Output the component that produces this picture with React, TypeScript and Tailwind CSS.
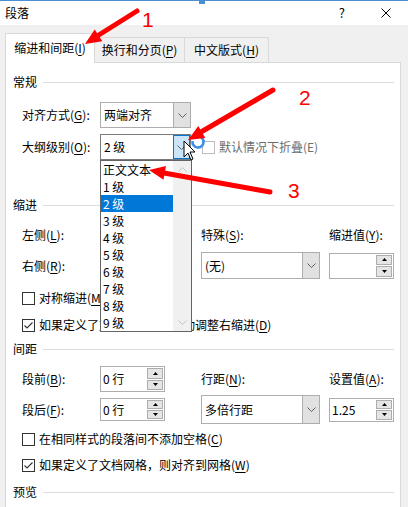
import React from "react";

const Acc = ({ k }: { k: string }) => (
  <>
    (<span className="underline underline-offset-[2px]">{k}</span>)
  </>
);

const Chevron = ({ color = "#606060", up = false }: { color?: string; up?: boolean }) => (
  <svg width="9" height="5" viewBox="0 0 9 5" className={up ? "rotate-180" : ""}>
    <polyline points="0.5,0.5 4.5,4.5 8.5,0.5" fill="none" stroke={color} strokeWidth="1" />
  </svg>
);

const Combo = ({ value, className, open = false }: { value: string; className: string; open?: boolean }) => (
  <div className={`flex bg-white border ${open ? "border-[#7a7a7a]" : "border-[#adadad]"} ${className}`}>
    <div className="flex-1 flex items-center pl-[3px]">{value}</div>
    {open ? (
      <div className="w-[17px] flex items-center justify-center bg-[#cce4f7] border border-[#0078d7]">
        <Chevron />
      </div>
    ) : (
      <div className="w-[17px] flex items-center justify-center bg-[#e1e1e1] border-l border-[#adadad]">
        <Chevron />
      </div>
    )}
  </div>
);

const SpinBtn = ({ up = false }: { up?: boolean }) => (
  <div className="w-[16px] flex-1 flex items-center justify-center bg-[#e5e5e5] border border-[#adadad]">
    <svg width="5" height="3" viewBox="0 0 5 3">
      {up ? <polygon points="2.5,0 5,3 0,3" fill="#000" /> : <polygon points="0,0 5,0 2.5,3" fill="#000" />}
    </svg>
  </div>
);

const Spin = ({ value, className }: { value: string; className: string }) => (
  <div className={`flex bg-white border border-[#adadad] ${className}`}>
    <div className="flex-1 flex items-center pl-[2px]">{value}</div>
    <div className="flex flex-col gap-[1px] p-[1px]">
      <SpinBtn up />
      <SpinBtn />
    </div>
  </div>
);

const Check = ({
  checked = false,
  disabled = false,
  children,
}: {
  checked?: boolean;
  disabled?: boolean;
  children: React.ReactNode;
}) => (
  <div className="flex items-center">
    <div
      className={`w-[13px] h-[13px] bg-white border flex items-center justify-center ${
        disabled ? "border-[#bcbcbc]" : "border-[#333333]"
      }`}
    >
      {checked && (
        <svg width="11" height="11" viewBox="0 0 11 11">
          <polyline points="1.5,5.5 4,8 9.5,2.5" fill="none" stroke="#333" strokeWidth="1.1" />
        </svg>
      )}
    </div>
    <span className={`ml-[4px] whitespace-nowrap ${disabled ? "text-[#6d6d6d]" : ""}`}>{children}</span>
  </div>
);

const Section = ({ title, className }: { title: string; className: string }) => (
  <div className={`flex items-center h-[20px] -ml-[9px] ${className}`}>
    <span>{title}</span>
    <div className="flex-1 h-px bg-[#dcdcdc] ml-[6px]" />
  </div>
);

const levels = ["正文文本", "1 级", "2 级", "3 级", "4 级", "5 级", "6 级", "7 级", "8 级", "9 级"];

// open list of the 大纲级别 combo, lies over the rows below it
const DropList = () => (
  <div className="absolute left-0 top-full w-[92px] h-[172px] bg-white border border-[#646464] z-20 flex">
    <div className="flex-1 flex flex-col">
      {levels.map((l) => (
        <div
          key={l}
          className={`h-[17px] flex items-center pl-[2px] ${l === "2 级" ? "bg-[#0078d7] text-white" : ""}`}
        >
          {l}
        </div>
      ))}
    </div>
    <div className="w-[18px] bg-[#f0f0f0] flex flex-col justify-between items-center py-[6px]">
      <Chevron color="#c2c2c2" up />
      <Chevron color="#c2c2c2" />
    </div>
  </div>
);

const Annotations = () => (
  <svg className="absolute inset-0 z-30 pointer-events-none" width="408" height="507" viewBox="0 0 408 507">
    {/* busy cursor */}
    <path d="M198 136.5 A5.5 5.5 0 1 1 192.6 141" fill="none" stroke="#3b8ee8" strokeWidth="2.6" />
    <path
      d="M184 141 L184 157 L188 153 L191 160 L193 159 L190 152 L195 152 Z"
      fill="#fff"
      stroke="#000"
      strokeWidth="1"
      strokeLinejoin="round"
    />
    {/* arrow 1 */}
    <line x1="137" y1="11" x2="98" y2="35.5" stroke="#f00" strokeWidth="5" strokeLinecap="round" />
    <polygon points="85,44 102.3,41.3 94.7,29.5" fill="#f00" />
    <text x="142" y="27" fill="#f00" fontSize="21" fontFamily="'Liberation Sans', sans-serif">
      1
    </text>
    {/* arrow 2 */}
    <line x1="273" y1="90" x2="201" y2="132" stroke="#f00" strokeWidth="5" strokeLinecap="round" />
    <polygon points="188,140 205.3,137.9 198.3,125.9" fill="#f00" />
    <text x="299" y="105" fill="#f00" fontSize="21" fontFamily="'Liberation Sans', sans-serif">
      2
    </text>
    {/* arrow 3 */}
    <line x1="270" y1="192" x2="164" y2="173" stroke="#f00" strokeWidth="5" strokeLinecap="round" />
    <polygon points="149,170 166,166 163.5,179.8" fill="#f00" />
    <text x="288" y="198" fill="#f00" fontSize="21" fontFamily="'Liberation Sans', sans-serif">
      3
    </text>
  </svg>
);

export default function App() {
  return (
    <div className="relative w-[408px] h-[507px] overflow-hidden bg-[#f0f0f0] text-black text-[12px] leading-[16px] font-['Noto_Sans_CJK_SC','Noto_Sans',sans-serif]">
      {/* title bar */}
      <div className="relative h-[25px] bg-white border-t border-[#4a8fd4] flex items-center pl-[5px]">
        <div className="absolute left-[199px] -top-px w-[6px] h-[4px] bg-[#4a8fd4]" />
        <span>段落</span>
        <span className="ml-auto text-[13px]">?</span>
        <svg className="ml-[36px] mr-[17px]" width="10" height="10" viewBox="0 0 10 10">
          <line x1="0.5" y1="0.5" x2="9.5" y2="9.5" stroke="#000" strokeWidth="1" />
          <line x1="9.5" y1="0.5" x2="0.5" y2="9.5" stroke="#000" strokeWidth="1" />
        </svg>
      </div>

      {/* tabs */}
      <div className="flex items-end pt-[8px] pl-[5px]">
        <div className="relative z-10 w-[90px] h-[30px] -mb-px bg-white border border-b-0 border-[#d9d9d9] flex items-center justify-center pb-[2px]">
          缩进和间距<Acc k="I" />
        </div>
        <div className="w-[90px] h-[25px] border border-l-0 border-b-0 border-[#d9d9d9] flex items-center justify-center">
          换行和分页<Acc k="P" />
        </div>
        <div className="w-[84px] h-[25px] border border-l-0 border-b-0 border-[#d9d9d9] flex items-center justify-center">
          中文版式<Acc k="H" />
        </div>
      </div>

      {/* panel */}
      <div className="ml-[5px] w-[396px] h-[500px] bg-white border border-[#d9d9d9] flex flex-col pl-[16px] pr-[6px]">
        <Section title="常规" className="mt-[9px]" />
        <div className="mt-[10px] h-[26px] flex items-center">
          <div className="w-[78px]">
            对齐方式<Acc k="G" />:
          </div>
          <Combo value="两端对齐" className="w-[91px] h-[26px]" />
        </div>
        <div className="mt-[6px] h-[26px] flex items-center">
          <div className="w-[78px]">
            大纲级别<Acc k="O" />:
          </div>
          <div className="relative w-[91px] h-[26px]">
            <Combo value="2 级" open className="w-full h-full" />
            <DropList />
          </div>
          <div className="ml-[11px]">
            <Check disabled>默认情况下折叠(E)</Check>
          </div>
        </div>

        <Section title="缩进" className="mt-[35px]" />
        <div className="mt-[7px] h-[26px] flex items-center">
          <div className="w-[78px]">
            左侧<Acc k="L" />:
          </div>
          <Spin value="" className="w-[65px] h-[26px]" />
          <div className="ml-[36px] w-[128px]">
            特殊<Acc k="S" />:
          </div>
          <div>
            缩进值<Acc k="Y" />:
          </div>
        </div>
        <div className="mt-[4px] h-[27px] flex items-center">
          <div className="w-[78px]">
            右侧<Acc k="R" />:
          </div>
          <Spin value="" className="w-[65px] h-[26px]" />
          <Combo value="(无)" className="ml-[36px] w-[119px] h-[27px]" />
          <Spin value="" className="ml-[9px] w-[65px] h-[26px]" />
        </div>
        <div className="mt-[9px] h-[20px] flex items-center">
          <Check>
            对称缩进<Acc k="M" />
          </Check>
        </div>
        <div className="mt-[7px] h-[20px] flex items-center">
          <Check checked>
            如果定义了文档网格，则自动调整右缩进<Acc k="D" />
          </Check>
        </div>

        <Section title="间距" className="mt-[4px]" />
        <div className="mt-[7px] h-[26px] flex items-center">
          <div className="w-[78px]">
            段前<Acc k="B" />:
          </div>
          <Spin value="0 行" className="w-[65px] h-[26px]" />
          <div className="ml-[36px] w-[128px]">
            行距<Acc k="N" />:
          </div>
          <div>
            设置值<Acc k="A" />:
          </div>
        </div>
        <div className="mt-[3px] h-[29px] flex items-center">
          <div className="w-[78px]">
            段后<Acc k="F" />:
          </div>
          <Spin value="0 行" className="w-[65px] h-[23px]" />
          <Combo value="多倍行距" className="ml-[36px] w-[119px] h-[29px]" />
          <Spin value="1.25" className="ml-[9px] w-[65px] h-[24px]" />
        </div>
        <div className="mt-[5px] h-[20px] flex items-center">
          <Check>
            在相同样式的段落间不添加空格<Acc k="C" />
          </Check>
        </div>
        <div className="mt-[6px] h-[20px] flex items-center">
          <Check checked>
            如果定义了文档网格，则对齐到网格<Acc k="W" />
          </Check>
        </div>
        <Section title="预览" className="mt-[7px]" />
      </div>

      <Annotations />
    </div>
  );
}
